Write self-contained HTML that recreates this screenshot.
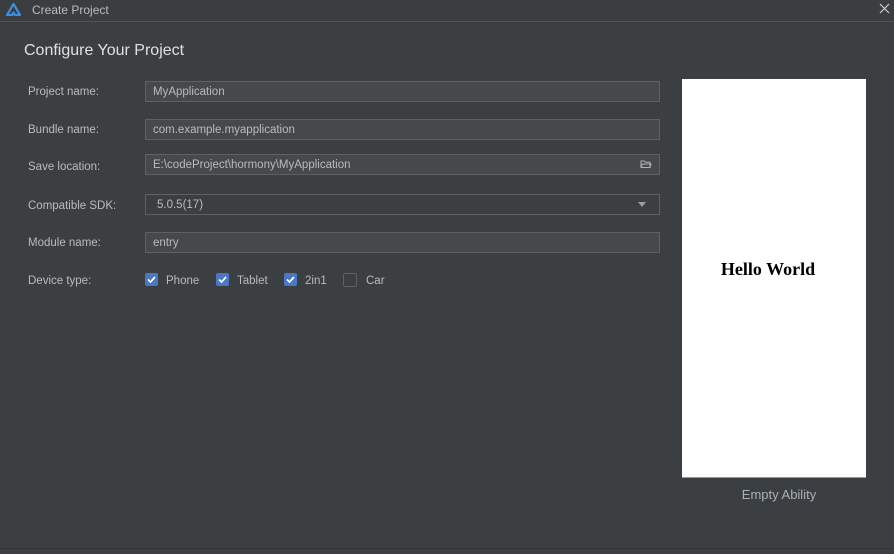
<!DOCTYPE html>
<html><head><style>
body{margin:0;width:894px;height:554px;background:#3c3f41;font-family:"Liberation Sans",sans-serif;overflow:hidden;position:relative;color:#bbbbbb}
.a{position:absolute}
.tb{left:0;top:0;width:894px;height:21px;background:#3b3e40;border-bottom:1px solid #515456}
.lbl{left:28px;font-size:11.5px;color:#bbbbbb}
.in{left:145px;height:19px;background:#45494a;border:1px solid #5e6161;font-size:11.5px;color:#bbbbbb;line-height:21px;padding-left:7px;box-sizing:content-box;width:506px}
.cb{width:13px;height:13px;border-radius:2px;background:#4a78c2;top:273px}
.cb svg{position:absolute;left:1px;top:1px}
.ct{top:275px;font-size:11.5px}
</style></head><body>
<div class="a tb"></div>
<svg class="a" style="left:6px;top:3px" width="15" height="13" viewBox="0 0 15 13"><path d="M7.5 1 L14 12 H9 L7.5 9.5 L6 12 H1 Z" fill="none" stroke="#3f8fe0" stroke-width="2.2" stroke-linejoin="round"/></svg>
<div class="a" style="left:32px;top:3px;font-size:12px;color:#bbbbbb">Create Project</div>
<svg class="a" style="left:879px;top:3px" width="11" height="11"><path d="M1 1L10 10M10 1L1 10" stroke="#cfcfcf" stroke-width="1.2"/></svg>
<div class="a" style="left:24px;top:42px;font-size:16px;color:#e0e0e0">Configure Your Project</div>

<div class="a lbl" style="top:86px">Project name:</div>
<div class="a in" style="top:81px">MyApplication</div>
<div class="a lbl" style="top:124px">Bundle name:</div>
<div class="a in" style="top:119px">com.example.myapplication</div>
<div class="a lbl" style="top:161px">Save location:</div>
<div class="a in" style="top:154px">E:\codeProject\hormony\MyApplication</div>
<svg class="a" style="left:640px;top:159px" width="12" height="10"><path d="M1 2H4.5L5.5 3.2H10V8.5H1Z M1 8.5L2.5 5H11L10 8.5" fill="none" stroke="#afb1b3" stroke-width="1"/></svg>
<div class="a lbl" style="top:200px">Compatible SDK:</div>
<div class="a in" style="top:194px;background:#3c3f41;padding-left:11px;width:502px">5.0.5(17)</div>
<svg class="a" style="left:638px;top:202px" width="8" height="5"><path d="M0 0H8L4 5Z" fill="#9a9c9e"/></svg>
<div class="a lbl" style="top:237px">Module name:</div>
<div class="a in" style="top:232px">entry</div>
<div class="a lbl" style="top:275px">Device type:</div>

<div class="a cb" style="left:145px"><svg width="11" height="11"><path d="M2 5.5L4.5 8L9 3" fill="none" stroke="#fff" stroke-width="1.7"/></svg></div>
<div class="a ct" style="left:166px">Phone</div>
<div class="a cb" style="left:216px"><svg width="11" height="11"><path d="M2 5.5L4.5 8L9 3" fill="none" stroke="#fff" stroke-width="1.7"/></svg></div>
<div class="a ct" style="left:237px">Tablet</div>
<div class="a cb" style="left:284px"><svg width="11" height="11"><path d="M2 5.5L4.5 8L9 3" fill="none" stroke="#fff" stroke-width="1.7"/></svg></div>
<div class="a ct" style="left:305px">2in1</div>
<div class="a cb" style="left:343px;background:#3c3f41;border:1px solid #5e6161;width:12px;height:12px"></div>
<div class="a ct" style="left:366px">Car</div>

<div class="a" style="left:682px;top:79px;width:184px;height:398px;background:#fff;border-bottom:1px solid #999"></div>
<div class="a" style="left:682px;top:259px;width:172px;text-align:center;font-family:'Liberation Serif',serif;font-weight:bold;font-size:18px;color:#000">Hello World</div>
<div class="a" style="left:682px;top:487px;width:194px;text-align:center;font-size:13px;color:#a9b1b8">Empty Ability</div>
<div class="a" style="left:0;top:548px;width:894px;height:1px;background:#333537"></div>
</body></html>
